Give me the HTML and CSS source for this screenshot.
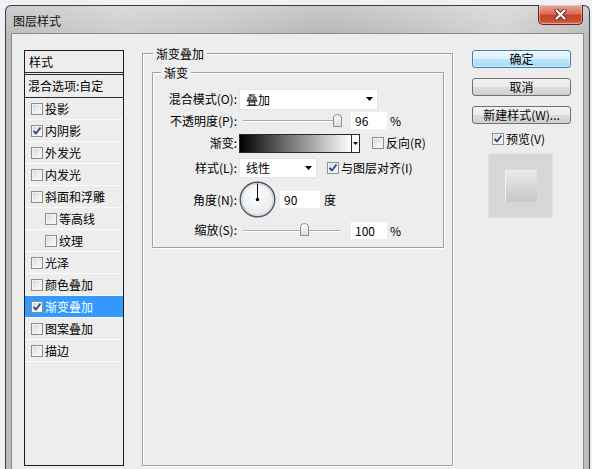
FILE: index.html
```html
<!DOCTYPE html>
<html lang="zh-CN">
<head>
<meta charset="utf-8">
<title>图层样式</title>
<link rel="stylesheet" href="styles.css">
</head>
<body>
<div class="window">
  <div class="titlebar">
    <span class="title">图层样式</span>
    <div class="close">
      <svg width="13" height="11" viewBox="0 0 13 11"><path d="M2.5 1.5L10.5 9.5M10.5 1.5L2.5 9.5" stroke="#6b2218" stroke-width="4" stroke-linecap="round"/><path d="M2.5 1.5L10.5 9.5M10.5 1.5L2.5 9.5" stroke="#fff" stroke-width="2.2" stroke-linecap="round"/></svg>
    </div>
  </div>
  <div class="client">
    <div class="list">
      <div class="list-head">样式</div>
      <div class="list-blend">混合选项:自定</div>
      <div class="item"><span class="cb"></span>投影</div>
      <div class="item"><span class="cb"><svg width="10" height="10" viewBox="0 0 10 10"><path d="M1.5 5L4 7.5L8.5 1.5" fill="none" stroke="#28468a" stroke-width="1.8"/></svg></span>内阴影</div>
      <div class="item"><span class="cb"></span>外发光</div>
      <div class="item"><span class="cb"></span>内发光</div>
      <div class="item"><span class="cb"></span>斜面和浮雕</div>
      <div class="item sub"><span class="cb"></span>等高线</div>
      <div class="item sub"><span class="cb"></span>纹理</div>
      <div class="item"><span class="cb"></span>光泽</div>
      <div class="item"><span class="cb"></span>颜色叠加</div>
      <div class="item sel"><span class="cb"><svg width="10" height="10" viewBox="0 0 10 10"><path d="M1.5 5L4 7.5L8.5 1.5" fill="none" stroke="#28468a" stroke-width="1.8"/></svg></span>渐变叠加</div>
      <div class="item"><span class="cb"></span>图案叠加</div>
      <div class="item"><span class="cb"></span>描边</div>
    </div>

    <div class="group group-outer">
      <div class="gtitle">渐变叠加</div>
      <div class="group group-inner">
        <div class="gtitle gtitle-inner">渐变</div>
        <div class="rows">
          <div class="row r1">
            <span class="lbl">混合模式(O):</span>
            <div class="select sel-wide"><span>叠加</span><svg width="7" height="4" viewBox="0 0 7 4"><path d="M0 0H7L3.5 4Z"/></svg></div>
          </div>
          <div class="row r2">
            <span class="lbl">不透明度(P):</span>
            <div class="slider">
              <div class="track"></div>
              <svg class="thumb thumb-96" width="9" height="13" viewBox="0 0 9 13"><defs><linearGradient id="tg1" x1="0" y1="0" x2="0" y2="1"><stop offset="0" stop-color="#fdfdfd"/><stop offset="1" stop-color="#dcdcdc"/></linearGradient></defs><path d="M0.5 4Q0.5 0.5 4.5 0.5Q8.5 0.5 8.5 4V12.5H0.5Z" fill="url(#tg1)" stroke="#8c8c8c"/></svg>
            </div>
            <span class="num">96</span>
            <span class="unit">%</span>
          </div>
          <div class="row r3">
            <span class="lbl">渐变:</span>
            <div class="grad"><div class="grad-fill"></div><div class="grad-drop"><svg width="5" height="3" viewBox="0 0 5 3"><path d="M0 0H5L2.5 3Z"/></svg></div></div>
            <div class="opt opt-rev"><span class="cb"></span>反向(R)</div>
          </div>
          <div class="row r4">
            <span class="lbl">样式(L):</span>
            <div class="select sel-narrow"><span>线性</span><svg width="7" height="4" viewBox="0 0 7 4"><path d="M0 0H7L3.5 4Z"/></svg></div>
            <div class="opt opt-align"><span class="cb"><svg width="10" height="10" viewBox="0 0 10 10"><path d="M1.5 5L4 7.5L8.5 1.5" fill="none" stroke="#28468a" stroke-width="1.8"/></svg></span>与图层对齐(I)</div>
          </div>
          <div class="row r5">
            <span class="lbl">角度(N):</span>
            <svg class="dial" width="37" height="37" viewBox="0 0 37 37"><defs><radialGradient id="dg" cx="0.45" cy="0.4" r="0.6"><stop offset="0" stop-color="#ffffff"/><stop offset="1" stop-color="#e6e8ea"/></radialGradient></defs><circle cx="18.5" cy="18.5" r="17.3" fill="url(#dg)" stroke="#4d5864" stroke-width="1.4"/><circle cx="18.5" cy="18.5" r="15.8" fill="none" stroke="#c9d0d6" stroke-width="1"/><path d="M18.5 18.5V2.5" stroke="#111" stroke-width="1"/><circle cx="18.5" cy="18.5" r="1.7" fill="#000"/></svg>
            <span class="num num-angle">90</span>
            <span class="unit unit-deg">度</span>
          </div>
          <div class="row r6">
            <span class="lbl">缩放(S):</span>
            <div class="slider">
              <div class="track"></div>
              <svg class="thumb thumb-100" width="9" height="13" viewBox="0 0 9 13"><defs><linearGradient id="tg2" x1="0" y1="0" x2="0" y2="1"><stop offset="0" stop-color="#fdfdfd"/><stop offset="1" stop-color="#dcdcdc"/></linearGradient></defs><path d="M0.5 4Q0.5 0.5 4.5 0.5Q8.5 0.5 8.5 4V12.5H0.5Z" fill="url(#tg2)" stroke="#8c8c8c"/></svg>
            </div>
            <span class="num">100</span>
            <span class="unit">%</span>
          </div>
        </div>
      </div>
    </div>

    <div class="side">
      <div class="btn btn-default">确定</div>
      <div class="btn">取消</div>
      <div class="btn btn-last">新建样式(W)...</div>
      <div class="opt opt-preview"><span class="cb"><svg width="10" height="10" viewBox="0 0 10 10"><path d="M1.5 5L4 7.5L8.5 1.5" fill="none" stroke="#28468a" stroke-width="1.8"/></svg></span>预览(V)</div>
      <div class="pv"><div class="pv-in"></div></div>
    </div>
  </div>
</div>
</body>
</html>
```

FILE: styles.css
```css
html, body {
  margin: 0;
  height: 469px;
  overflow: hidden;
}
body {
  background: #eef1f5;
  font-family: "Noto Sans CJK SC", "Liberation Sans", sans-serif;
  font-size: 12px;
  color: #000;
}
.window {
  margin: 5px 0 0 5px;
  width: 585px;
  height: 470px;
  box-sizing: border-box;
  border: 1px solid #3e3e3e;
  border-bottom: 0;
  border-radius: 6px 6px 0 0;
  padding: 0 5px;
  background:
    linear-gradient(180deg, rgba(255,255,255,0.25), rgba(255,255,255,0) 30px),
    linear-gradient(90deg, #bcbcbc 0%, #cdcdcd 20%, #c6c6c6 35%, #b6b6b6 55%, #c2c2c2 70%, #d2d2d2 85%, #bcbcbc 100%);
}
.titlebar {
  height: 27px;
  display: flex;
  justify-content: space-between;
  align-items: flex-start;
}
.title {
  margin-top: 2px;
  padding-left: 2px;
  line-height: 26px;
  color: #111;
}
.close {
  width: 45px;
  height: 20px;
  margin-top: -1px;
  margin-right: 1px;
  box-sizing: border-box;
  border: 1px solid #5b2a22;
  border-top: 0;
  border-radius: 0 0 5px 5px;
  background: linear-gradient(180deg, #e7a899 0%, #d9705c 45%, #c6432a 55%, #c94e33 85%, #e07a5c 100%);
  box-shadow: inset 0 0 0 1px rgba(255,220,210,0.45);
  display: flex;
  align-items: center;
  justify-content: center;
}
.client {
  height: 440px;
  border: 1px solid #8a8a8a;
  border-bottom: 0;
  background: #ededed;
  padding: 16px 0 0 12px;
  display: flex;
  align-items: flex-start;
}

/* left list */
.list {
  width: 100px;
  height: 416px;
  box-sizing: border-box;
  border: 1px solid #1c1c1c;
  margin-right: 18px;
  flex: none;
}
.list-head {
  height: 21px;
  line-height: 21px;
  padding-left: 4px;
  border-bottom: 3px double #2a2a2a;
}
.list-blend {
  height: 22px;
  line-height: 22px;
  padding-left: 3px;
  border-bottom: 1px solid #2a2a2a;
}
.item {
  height: 21px;
  line-height: 21px;
  border-bottom: 1px solid #fbfbfb;
  display: flex;
  align-items: center;
  gap: 2px;
  padding-left: 6px;
}
.item.sub { padding-left: 20px; }
.item.sel {
  background: #3399ff;
  color: #fff;
}
.cb {
  width: 12px;
  height: 12px;
  box-sizing: border-box;
  border: 1px solid #8e8f8f;
  background: linear-gradient(135deg, #d4d4d4 0%, #f0f0f0 60%, #fbfbfb 100%);
  box-shadow: inset 0 0 0 1px #f3f3f3;
  flex: none;
  display: flex;
  align-items: center;
  justify-content: center;
}

/* group boxes */
.group {
  box-sizing: border-box;
  border: 1px solid #a0a0a0;
  box-shadow: 1px 1px 0 #fff, inset 1px 1px 0 #fff;
}
.group-outer {
  width: 311px;
  height: 413px;
  margin-top: 3px;
  margin-right: 19px;
  flex: none;
}
.gtitle {
  width: fit-content;
  margin: -8px 0 0 10px;
  padding: 0 3px;
  line-height: 16px;
  background: #ededed;
}
.group-inner {
  width: 292px;
  height: 176px;
  margin: 10px 0 0 9px;
}
.gtitle-inner { margin-left: 8px; }
.rows { margin-top: 7px; }
.row {
  display: flex;
  align-items: center;
}
.r1 { height: 22px; }
.r2 { height: 21px; }
.r3 { height: 24px; }
.r4 { height: 25px; }
.r5 { height: 39px; }
.r6 { height: 22px; }
.lbl {
  width: 84px;
  margin-right: 2px;
  text-align: right;
  flex: none;
  line-height: 16px;
}
.select {
  height: 21px;
  box-sizing: border-box;
  background: #fff;
  border: 1px solid #e4e4e4;
  display: flex;
  align-items: center;
  justify-content: space-between;
  padding: 0 4px 0 6px;
  flex: none;
}
.sel-wide { width: 139px; }
.sel-narrow { width: 78px; height: 20px; }
.slider {
  width: 106px;
  height: 14px;
  position: relative;
  display: flex;
  align-items: center;
  flex: none;
}
.track {
  flex: 1;
  margin: 1px 5px 0 4px;
  height: 1px;
  background: #acacac;
  border-bottom: 1px solid #fff;
}
.thumb {
  position: absolute;
  top: 0;
}
.thumb-96 { left: 94px; }
.thumb-100 { left: 61px; }
.num {
  width: 36px;
  height: 17px;
  box-sizing: border-box;
  background: #fff;
  line-height: 17px;
  padding-left: 4px;
  margin-left: 6px;
  flex: none;
}
.unit { margin-left: 3px; }
.grad {
  width: 121px;
  height: 19px;
  box-sizing: border-box;
  border: 1px solid #2a2a2a;
  display: flex;
  flex: none;
}
.grad-fill {
  flex: 1;
  background: linear-gradient(90deg, #000 0%, #6a6a6a 40%, #fff 100%);
}
.grad-drop {
  width: 7px;
  border-left: 1px solid #2a2a2a;
  background: #fff;
  display: flex;
  align-items: center;
  justify-content: center;
}
.opt {
  display: flex;
  align-items: center;
  gap: 2px;
  line-height: 16px;
}
.opt-rev { margin-left: 12px; }
.opt-align { margin-left: 10px; }
.dial { flex: none; }
.num-angle { width: 40px; margin-left: 4px; }
.unit-deg { margin-left: 4px; }

/* right side */
.side {
  width: 99px;
  display: flex;
  flex-direction: column;
  flex: none;
}
.btn {
  height: 18px;
  box-sizing: border-box;
  border: 1px solid #707070;
  border-radius: 3px;
  line-height: 16px;
  text-align: center;
  margin-bottom: 10px;
  background: linear-gradient(180deg, #f2f2f2 0%, #ebebeb 50%, #dddddd 50%, #cfcfcf 100%);
}
.btn-default {
  border-color: #3c7fb1;
  background: linear-gradient(180deg, #eaf6fd 0%, #d9f0fc 50%, #bee6fd 50%, #a7d9f5 100%);
  box-shadow: inset 0 0 0 1px rgba(255,255,255,0.5);
}
.btn-last { margin-bottom: 7px; }
.opt-preview {
  height: 16px;
  margin-left: 20px;
}
.pv {
  width: 65px;
  height: 65px;
  margin: 6px 0 0 16px;
  box-sizing: border-box;
  background: #d7d7d7;
  border: 1px solid #e2e2e2;
  display: flex;
  align-items: center;
  justify-content: center;
}
.pv-in {
  width: 32px;
  height: 32px;
  background: linear-gradient(180deg, #ebebeb 0%, #d6d6d6 55%, #c8c8c8 100%);
  box-shadow: inset 1px 1px 0 #f2f2f2;
}
```
